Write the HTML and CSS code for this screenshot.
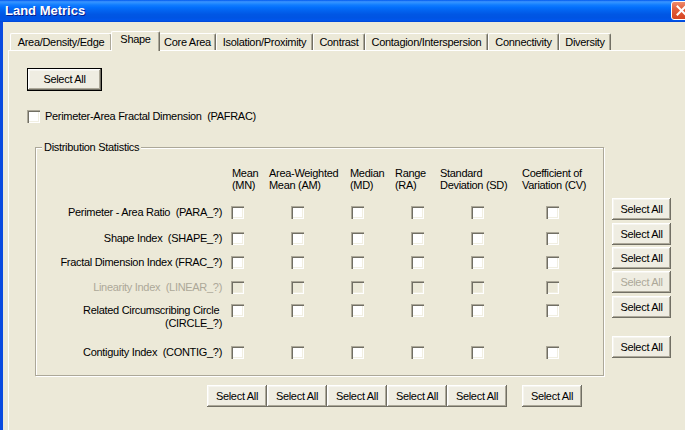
FILE: index.html
```html
<!DOCTYPE html>
<html>
<head>
<meta charset="utf-8">
<title>Land Metrics</title>
<link rel="stylesheet" href="styles.css">
</head>
<body>
<div class="window">
  <div class="titlebar">
    <span class="title">Land Metrics</span>
    <span class="close"><svg width="11" height="11" viewBox="0 0 11 11"><path d="M1.5 1.5 L9.5 9.5 M9.5 1.5 L1.5 9.5" stroke="#fff" stroke-width="2" stroke-linecap="square"/></svg></span>
  </div>
  <div class="client">
    <div class="tabstrip">
      <div class="tab">Area/Density/Edge</div>
      <div class="tab active">Shape</div>
      <div class="tab">Core Area</div>
      <div class="tab">Isolation/Proximity</div>
      <div class="tab">Contrast</div>
      <div class="tab">Contagion/Interspersion</div>
      <div class="tab">Connectivity</div>
      <div class="tab">Diversity</div>
    </div>
    <div class="pane">
      <button class="btn default">Select All</button>
      <div class="check-row"><span class="cb"></span><span>Perimeter-Area Fractal Dimension&nbsp; (PAFRAC)</span></div>
      <div class="stats-area">
        <div class="groupbox">
          <span class="gb-title">Distribution Statistics</span>
          <div class="headers">
            <div class="h">Mean<br>(MN)</div>
            <div class="h">Area-Weighted<br>Mean (AM)</div>
            <div class="h">Median<br>(MD)</div>
            <div class="h">Range<br>(RA)</div>
            <div class="h">Standard<br>Deviation (SD)</div>
            <div class="h">Coefficient of<br>Variation (CV)</div>
          </div>
          <div class="row r1"><span class="lbl">Perimeter - Area Ratio&nbsp; (PARA_?)</span><span class="cb"></span><span class="cb"></span><span class="cb"></span><span class="cb"></span><span class="cb"></span><span class="cb"></span></div>
          <div class="row r2"><span class="lbl">Shape Index&nbsp; (SHAPE_?)</span><span class="cb"></span><span class="cb"></span><span class="cb"></span><span class="cb"></span><span class="cb"></span><span class="cb"></span></div>
          <div class="row r3"><span class="lbl">Fractal Dimension Index (FRAC_?)</span><span class="cb"></span><span class="cb"></span><span class="cb"></span><span class="cb"></span><span class="cb"></span><span class="cb"></span></div>
          <div class="row r4 disabled"><span class="lbl">Linearity Index&nbsp; (LINEAR_?)</span><span class="cb"></span><span class="cb"></span><span class="cb"></span><span class="cb"></span><span class="cb"></span><span class="cb"></span></div>
          <div class="row r5"><span class="lbl">Related Circumscribing Circle&nbsp;<br>(CIRCLE_?)</span><span class="cb"></span><span class="cb"></span><span class="cb"></span><span class="cb"></span><span class="cb"></span><span class="cb"></span></div>
          <div class="row r6"><span class="lbl">Contiguity Index&nbsp; (CONTIG_?)</span><span class="cb"></span><span class="cb"></span><span class="cb"></span><span class="cb"></span><span class="cb"></span><span class="cb"></span></div>
        </div>
        <div class="side-btns">
          <button class="btn side">Select All</button>
          <button class="btn side">Select All</button>
          <button class="btn side">Select All</button>
          <button class="btn side" disabled>Select All</button>
          <button class="btn side">Select All</button>
          <button class="btn side">Select All</button>
        </div>
      </div>
      <div class="bottom-btns">
        <button class="btn col">Select All</button>
        <button class="btn col">Select All</button>
        <button class="btn col">Select All</button>
        <button class="btn col">Select All</button>
        <button class="btn col">Select All</button>
        <button class="btn col">Select All</button>
      </div>
    </div>
  </div>
</div>
</body>
</html>
```

FILE: styles.css
```css
* { box-sizing: border-box; }
html, body { margin: 0; padding: 0; }
body {
  width: 685px;
  height: 430px;
  overflow: hidden;
  background: #ECE9D8;
  font-family: "Liberation Sans", Arial, sans-serif;
  font-size: 11px;
  letter-spacing: -0.3px;
  color: #000;
}
.window {
  width: 685px;
  height: 430px;
  display: flex;
  flex-direction: column;
  overflow: hidden;
}
.titlebar {
  height: 22px;
  flex: none;
  display: flex;
  align-items: flex-start;
  justify-content: space-between;
  padding-left: 5px;
  background: linear-gradient(to bottom, #0058EE 0%, #3A93FF 8%, #288EFF 14%, #127DFF 22%, #036FFC 34%, #0262EE 50%, #0057E5 65%, #0054E3 80%, #0055EB 92%, #0046D5 100%);
}
.title {
  color: #fff;
  font-weight: bold;
  font-size: 13px;
  letter-spacing: 0;
  line-height: 21px;
  text-shadow: 1px 1px 0 #0A1E8C;
}
.close {
  width: 21px;
  height: 19px;
  margin-top: 1px;
  margin-right: -7px;
  border: 1px solid #fff;
  border-radius: 3px;
  background: linear-gradient(to bottom, #EE8C6E 0%, #E2603E 40%, #D64420 100%);
  display: flex;
  align-items: center;
  justify-content: center;
}
.close svg { display: block; }
.client {
  flex: 1;
  display: flex;
  flex-direction: column;
  border-left: 3px solid #0A4BE0;
}
.tabstrip {
  display: flex;
  align-items: flex-end;
  padding: 9px 0 0 2px;
  margin-left: 5px;
  flex: none;
}
.tab {
  height: 17px;
  line-height: 16px;
  text-align: center;
  white-space: nowrap;
  border-top: 1px solid #fff;
  border-left: 1px solid #fff;
  border-right: 1px solid #716F64;
  border-radius: 2px 2px 0 0;
  box-shadow: inset -1px 0 0 #ACA899;
  background: #ECE9D8;
}
.tab:nth-child(1) { width: 102px; }
.tab:nth-child(2) { width: 49px; }
.tab:nth-child(3) { width: 57px; }
.tab:nth-child(4) { width: 97px; }
.tab:nth-child(5) { width: 52px; }
.tab:nth-child(6) { width: 123px; }
.tab:nth-child(7) { width: 71px; }
.tab:nth-child(8) { width: 52px; }
.tab.active {
  height: 20px;
  line-height: 15px;
  margin: 0 -1px -1px -1px;
  position: relative;
  z-index: 1;
}
.pane {
  flex: 1;
  margin-left: 5px;
  border-top: 1px solid #fff;
  border-left: 1px solid #fff;
  display: flex;
  flex-direction: column;
  align-items: flex-start;
  padding: 17px 0 0 18px;
}
.btn {
  font: inherit;
  letter-spacing: inherit;
  color: #000;
  background: #EFEDE2;
  border: none;
  padding: 0;
  margin: 0;
  line-height: 1;
  box-shadow: inset -1px -1px 0 #716F64, inset 1px 1px 0 #fff, inset -2px -2px 0 #ACA899, inset 2px 2px 0 #F6F5EF;
}
.btn:disabled { color: #ACA899; }
.btn.default {
  width: 75px;
  height: 23px;
  border: 1px solid #000;
}
.cb {
  width: 13px;
  height: 13px;
  flex: none;
  background: #fff;
  box-shadow: inset 1px 1px 0 #ACA899, inset 2px 2px 0 #716F64, inset -1px -1px 0 #fff, inset -2px -2px 0 #F1EFE2;
}
.check-row {
  display: flex;
  align-items: center;
  gap: 5px;
  margin-top: 19px;
  line-height: 13px;
}
.stats-area {
  display: flex;
  align-items: flex-start;
  margin: 24px 0 0 8px;
}
.groupbox {
  position: relative;
  width: 569px;
  height: 229px;
  border: 1px solid #ACA899;
  box-shadow: inset 1px 1px 0 #fff, 1px 1px 0 #fff;
  padding-top: 19px;
}
.gb-title {
  position: absolute;
  top: -7px;
  left: 6px;
  padding: 0 2px;
  line-height: 13px;
  background: #ECE9D8;
}
.headers {
  display: flex;
  padding-left: 196px;
  line-height: 12px;
  white-space: nowrap;
}
.h:nth-child(1) { width: 37px; }
.h:nth-child(2) { width: 81px; }
.h:nth-child(3) { width: 45px; }
.h:nth-child(4) { width: 45px; }
.h:nth-child(5) { width: 82px; }
.row {
  display: grid;
  grid-template-columns: 195px 60px 60px 60px 60px 75px 13px;
  align-items: start;
  line-height: 13px;
}
.lbl {
  text-align: right;
  padding-right: 9px;
  white-space: nowrap;
}
.r1 { margin-top: 15px; height: 26px; }
.r2 { height: 24px; }
.r3 { height: 25px; }
.r4 { height: 23px; }
.r5 { height: 42px; }
.r6 { height: 13px; }
.disabled .lbl { color: #ACA899; }
.disabled .cb { background: #ECE9D8; }
.side-btns {
  display: flex;
  flex-direction: column;
  margin-left: 8px;
  padding-top: 51px;
}
.btn.side { width: 59px; height: 22px; }
.btn.side:nth-child(2) { margin-top: 3px; }
.btn.side:nth-child(3) { margin-top: 2px; }
.btn.side:nth-child(4) { margin-top: 2px; }
.btn.side:nth-child(5) { margin-top: 3px; }
.btn.side:nth-child(6) { margin-top: 18px; }
.bottom-btns {
  display: flex;
  margin: 9px 0 0 180px;
}
.btn.col { width: 60px; height: 22px; }
.btn.col:last-child { margin-left: 15px; }
```
